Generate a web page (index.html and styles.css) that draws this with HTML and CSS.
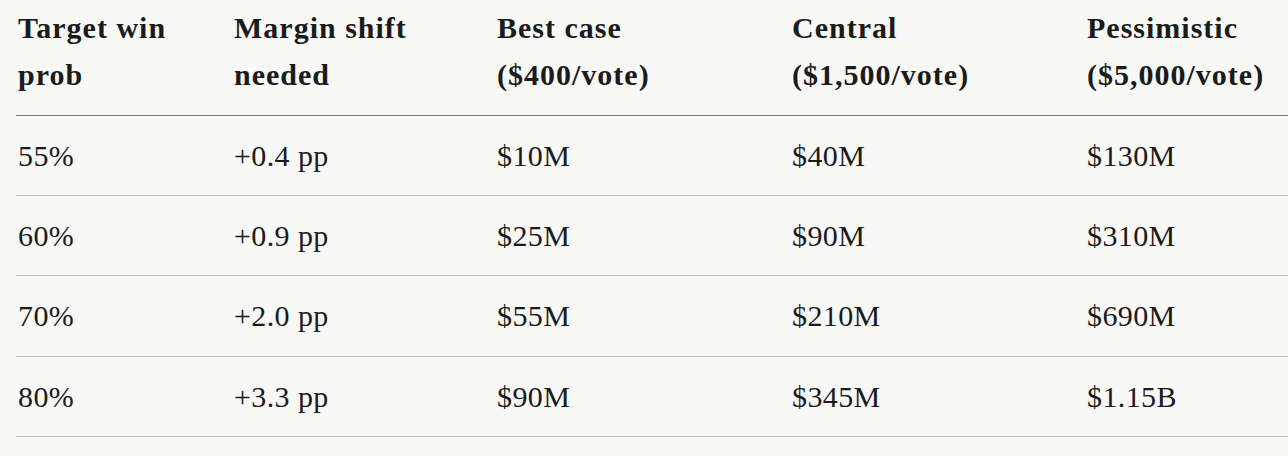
FILE: index.html
```html
<!DOCTYPE html>
<html lang="en">
<head>
<meta charset="utf-8">
<title>Win probability cost table</title>
<link rel="stylesheet" href="styles.css">
</head>
<body>
<div class="wrap">
<table class="cost">
  <colgroup>
    <col class="c1"><col class="c2"><col class="c3"><col class="c4"><col class="c5">
  </colgroup>
  <thead>
    <tr>
      <th>Target win<br>prob</th>
      <th>Margin shift<br>needed</th>
      <th>Best case<br>($400/vote)</th>
      <th>Central<br>($1,500/vote)</th>
      <th>Pessimistic<br>($5,000/vote)</th>
    </tr>
  </thead>
  <tbody>
    <tr><td>55%</td><td>+0.4 pp</td><td>$10M</td><td>$40M</td><td>$130M</td></tr>
    <tr><td>60%</td><td>+0.9 pp</td><td>$25M</td><td>$90M</td><td>$310M</td></tr>
    <tr><td>70%</td><td>+2.0 pp</td><td>$55M</td><td>$210M</td><td>$690M</td></tr>
    <tr><td>80%</td><td>+3.3 pp</td><td>$90M</td><td>$345M</td><td>$1.15B</td></tr>
  </tbody>
</table>
</div>
</body>
</html>
```
FILE: styles.css
```css
html, body {
  margin: 0;
  padding: 0;
  background: #f8f8f6;
  overflow: hidden;
}
body {
  font-family: "Liberation Serif", "Times New Roman", serif;
  color: #1b1b1b;
}
.wrap {
  padding-left: 16px;
}
.cost {
  width: 1272px;
  border-collapse: collapse;
  table-layout: fixed;
  font-size: 30px;
}
.c1 { width: 216px; }
.c2 { width: 263px; }
.c3 { width: 295px; }
.c4 { width: 295px; }
.c5 { width: 203px; }
.cost th {
  text-align: left;
  font-weight: 700;
  letter-spacing: 1px;
  line-height: 46.5px;
  padding: 5px 2px 17px;
  border-bottom: 1px solid #737373;
  vertical-align: top;
  white-space: nowrap;
}
.cost td {
  line-height: 46.2px;
  padding: 17px 2px 16px;
  border-bottom: 1px solid #bcbcbc;
  white-space: nowrap;
  letter-spacing: 0.4px;
}
```
